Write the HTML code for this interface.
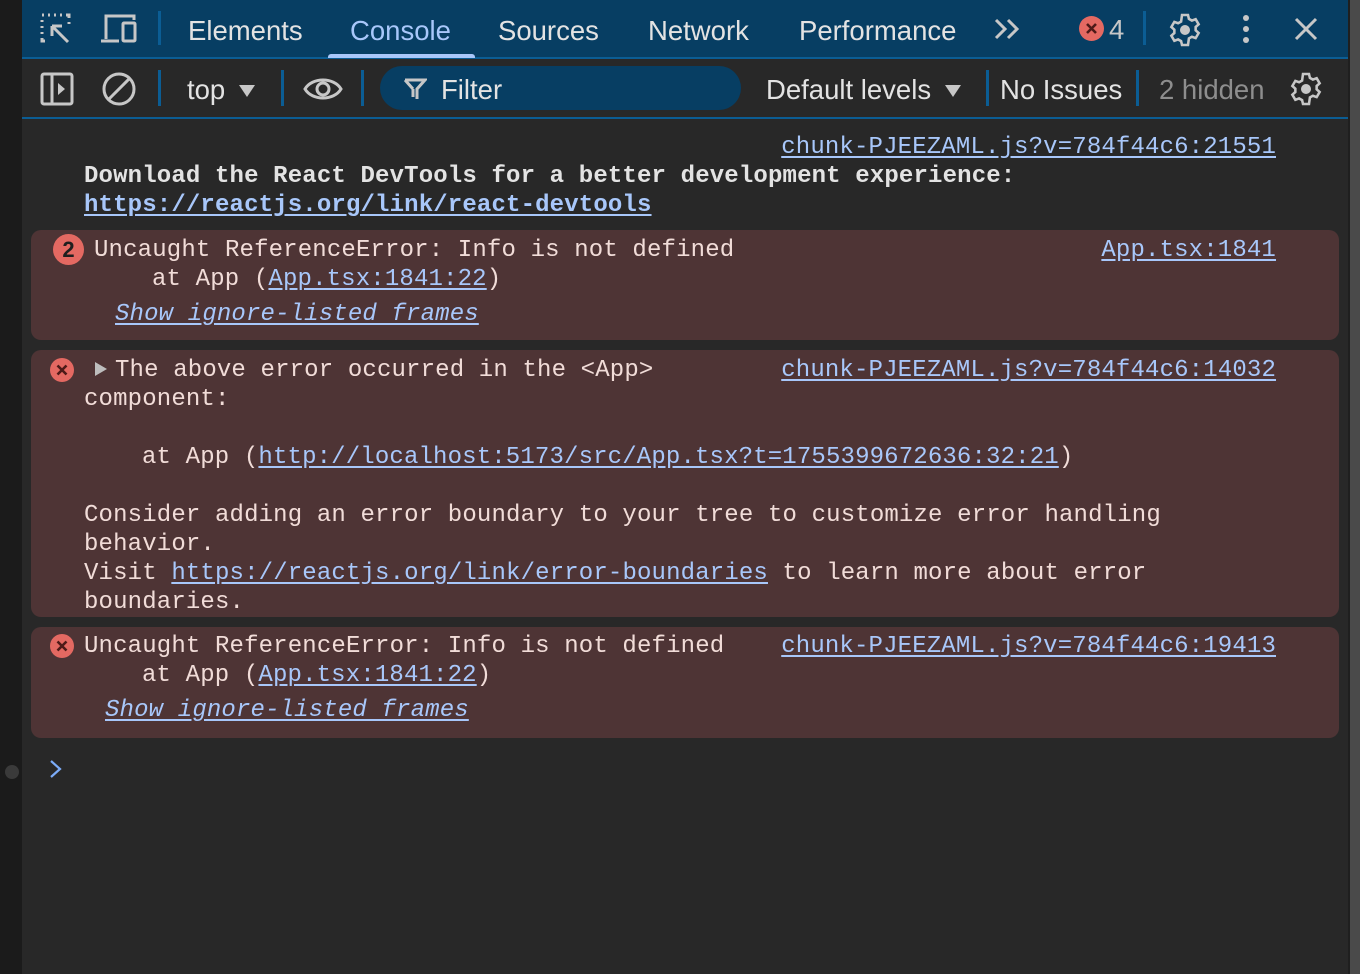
<!DOCTYPE html>
<html><head><meta charset="utf-8"><style>
*{margin:0;padding:0;box-sizing:border-box}
body{width:1360px;height:974px;background:#282828;position:relative;overflow:hidden;font-family:"Liberation Sans",sans-serif}
.l{position:absolute;font-family:"Liberation Mono","DejaVu Sans Mono",monospace;font-size:24px;letter-spacing:0.15px;line-height:29px;color:#f1dcd8;white-space:pre;margin-top:2px}
.w{color:#e3e3e3}
a,.a{color:#a8c7fa;text-decoration:underline;text-underline-offset:3px}
.r{right:84px}
.box{position:absolute;left:31px;right:21px;background:#4e3435;border-radius:10px}
.t{position:absolute;font-size:27.5px;color:#e3e3e3;line-height:30px;white-space:nowrap}
.sep{position:absolute;width:3px;background:#0b5d94}
svg{position:absolute}
</style></head><body>
<div style="position:absolute;left:0;top:0;width:22px;height:974px;background:#1b1b1b"></div>
<div style="position:absolute;left:5px;top:765px;width:14px;height:14px;border-radius:7px;background:#3a3a3a"></div>
<div style="position:absolute;left:1348px;top:0;width:12px;height:974px;background:#4a4a4a;border-left:2px solid #1f1f1f"></div>
<div style="position:absolute;left:22px;top:0;width:1326px;height:58px;background:#073e63"></div>
<div style="position:absolute;left:22px;top:57px;width:1326px;height:2px;background:#0b5d94"></div>
<div style="position:absolute;left:328px;top:54px;width:147px;height:4px;background:#a8c7fa;border-radius:3px 3px 0 0"></div>
<div style="position:absolute;left:22px;top:117px;width:1326px;height:2px;background:#0b5d94"></div>

<svg style="left:40px;top:12px" width="34" height="34" viewBox="0 0 34 34" fill="none" stroke="#c7c7c7" stroke-width="3"><path d="M2 3h2M8 3h2M14 3h2M20 3h2M26 3h3v3M29 10v2M2 8v2M2 14v2M2 20v2M2 26v3h3" /><path d="M12 14h10M12 14v10M13 15l15 15"/></svg>
<svg style="left:100px;top:13px" width="40" height="32" viewBox="0 0 40 32" fill="none" stroke="#c7c7c7" stroke-width="3"><path d="M6 26V3h28v4M1 28h18"/><rect x="23" y="10" width="12" height="18" rx="1"/></svg>
<div class="sep" style="left:158px;top:11px;height:34px"></div>
<div class="t" style="left:188px;top:16px">Elements</div>
<div class="t" style="left:350px;top:16px;color:#a8c7fa">Console</div>
<div class="t" style="left:498px;top:16px">Sources</div>
<div class="t" style="left:648px;top:16px">Network</div>
<div class="t" style="left:799px;top:16px">Performance</div>
<svg style="left:994px;top:17px" width="28" height="24" viewBox="0 0 28 24" fill="none" stroke="#c7c7c7" stroke-width="3"><path d="M2 3l9 9-9 9M14 3l9 9-9 9"/></svg>
<div style="position:absolute;left:1079px;top:16px;width:25px;height:25px;border-radius:13px;background:#e46962"></div>
<svg style="left:1079px;top:16px" width="25" height="25" viewBox="0 0 25 25" stroke="#4e1a18" stroke-width="2.6"><path d="M8 8l9 9M17 8l-9 9"/></svg>
<div class="t" style="left:1109px;top:15px;color:#c7c7c7">4</div>
<div class="sep" style="left:1143px;top:11px;height:34px"></div>
<svg style="left:1167px;top:12px" width="36" height="36" viewBox="0 0 24 24" fill="none" stroke="#c7c7c7" stroke-width="1.7"><path d="M10 2h4l.6 2.6 2 1.1 2.5-.9 2 3.4-2 1.8v2.2l2 1.8-2 3.4-2.5-.9-2 1.1L14 22h-4l-.6-2.6-2-1.1-2.5.9-2-3.4 2-1.8v-2.2l-2-1.8 2-3.4 2.5.9 2-1.1z"/><circle cx="12" cy="12" r="2.5" fill="#c7c7c7"/></svg>
<svg style="left:1240px;top:14px" width="12" height="30"><circle cx="6" cy="4" r="3" fill="#c7c7c7"/><circle cx="6" cy="15" r="3" fill="#c7c7c7"/><circle cx="6" cy="26" r="3" fill="#c7c7c7"/></svg>
<svg style="left:1294px;top:17px" width="24" height="24" stroke="#c7c7c7" stroke-width="3"><path d="M2 2l20 20M22 2L2 22"/></svg>

<svg style="left:40px;top:72px" width="34" height="34" viewBox="0 0 34 34" fill="none" stroke="#c7c7c7" stroke-width="3"><rect x="2" y="2" width="30" height="30" rx="2"/><path d="M12 2v30"/><path d="M18 11l7 6-7 6z" fill="#c7c7c7" stroke="none"/></svg>
<svg style="left:101px;top:71px" width="36" height="36" fill="none" stroke="#c7c7c7" stroke-width="3"><circle cx="18" cy="18" r="15"/><path d="M7 29L29 7"/></svg>
<div class="sep" style="left:158px;top:70px;height:36px"></div>
<div class="t" style="left:187px;top:75px">top</div>
<svg style="left:238px;top:84px" width="18" height="14"><path d="M1 1h16L9 13z" fill="#c7c7c7"/></svg>
<div class="sep" style="left:281px;top:70px;height:36px"></div>
<svg style="left:303px;top:74px" width="40" height="30" fill="none" stroke="#c7c7c7" stroke-width="3"><path d="M2 15C9 3 31 3 38 15 31 27 9 27 2 15z"/><circle cx="20" cy="15" r="6"/></svg>
<div class="sep" style="left:361px;top:70px;height:36px"></div>
<div style="position:absolute;left:380px;top:66px;width:361px;height:44px;border-radius:22px;background:#073e63"></div>
<svg style="left:403px;top:77px" width="24" height="24" fill="none" stroke="#c7c7c7" stroke-width="3"><path d="M2 3h20l-8 9v10M10 12L2 3M10 12v8"/></svg>
<div class="t" style="left:441px;top:75px">Filter</div>
<div class="t" style="left:766px;top:75px">Default levels</div>
<svg style="left:944px;top:84px" width="18" height="14"><path d="M1 1h16L9 13z" fill="#c7c7c7"/></svg>
<div class="sep" style="left:986px;top:70px;height:36px"></div>
<div class="t" style="left:1000px;top:75px">No Issues</div>
<div class="sep" style="left:1136px;top:70px;height:36px"></div>
<div class="t" style="left:1159px;top:75px;color:#8e8e8e">2 hidden</div>
<svg style="left:1288px;top:71px" width="36" height="36" viewBox="0 0 24 24" fill="none" stroke="#c7c7c7" stroke-width="1.7"><path d="M10 2h4l.6 2.6 2 1.1 2.5-.9 2 3.4-2 1.8v2.2l2 1.8-2 3.4-2.5-.9-2 1.1L14 22h-4l-.6-2.6-2-1.1-2.5.9-2-3.4 2-1.8v-2.2l-2-1.8 2-3.4 2.5.9 2-1.1z"/><circle cx="12" cy="12" r="2.5" fill="#c7c7c7"/></svg>

<div class="l r a" style="top:131px">chunk-PJEEZAML.js?v=784f44c6:21551</div>
<div class="l w" style="left:84px;top:160px;font-weight:bold">Download the React DevTools for a better development experience:</div>
<div class="l a" style="left:84px;top:189px;font-weight:bold">https://reactjs.org/link/react-devtools</div>

<div class="box" style="top:230px;height:110px"></div>
<div style="position:absolute;left:53px;top:234px;width:31px;height:31px;border-radius:16px;background:#e46962;color:#1f1f1f;font:bold 22px/31px 'Liberation Sans',sans-serif;text-align:center">2</div>
<div class="l" style="left:94px;top:234px">Uncaught ReferenceError: Info is not defined</div>
<div class="l r a" style="top:234px">App.tsx:1841</div>
<div class="l" style="left:152px;top:263px">at App (<span class="a">App.tsx:1841:22</span>)</div>
<div class="l a" style="left:115px;top:298px;font-style:italic">Show ignore-listed frames</div>

<div class="box" style="top:350px;height:267px"></div>
<div style="position:absolute;left:50px;top:358px;width:24px;height:24px;border-radius:12px;background:#e46962"></div>
<svg style="left:50px;top:358px" width="24" height="24" stroke="#4e1a18" stroke-width="2.6"><path d="M7.5 7.5l9 9M16.5 7.5l-9 9"/></svg>
<svg style="left:94px;top:361px" width="14" height="16"><path d="M1 1l12 7-12 7z" fill="#bdbdbd"/></svg>
<div class="l" style="left:115px;top:354px">The above error occurred in the &lt;App&gt;</div>
<div class="l r a" style="top:354px">chunk-PJEEZAML.js?v=784f44c6:14032</div>
<div class="l" style="left:84px;top:383px">component:</div>
<div class="l" style="left:142px;top:441px">at App (<span class="a">http://localhost:5173/src/App.tsx?t=1755399672636:32:21</span>)</div>
<div class="l" style="left:84px;top:499px">Consider adding an error boundary to your tree to customize error handling</div>
<div class="l" style="left:84px;top:528px">behavior.</div>
<div class="l" style="left:84px;top:557px">Visit <span class="a">https://reactjs.org/link/error-boundaries</span> to learn more about error</div>
<div class="l" style="left:84px;top:586px">boundaries.</div>

<div class="box" style="top:627px;height:111px"></div>
<div style="position:absolute;left:50px;top:634px;width:24px;height:24px;border-radius:12px;background:#e46962"></div>
<svg style="left:50px;top:634px" width="24" height="24" stroke="#4e1a18" stroke-width="2.6"><path d="M7.5 7.5l9 9M16.5 7.5l-9 9"/></svg>
<div class="l" style="left:84px;top:630px">Uncaught ReferenceError: Info is not defined</div>
<div class="l r a" style="top:630px">chunk-PJEEZAML.js?v=784f44c6:19413</div>
<div class="l" style="left:142px;top:659px">at App (<span class="a">App.tsx:1841:22</span>)</div>
<div class="l a" style="left:105px;top:694px;font-style:italic">Show ignore-listed frames</div>

<svg style="left:49px;top:759px" width="14" height="20" fill="none" stroke="#7cacf8" stroke-width="2.2"><path d="M2 2l9 8-9 8"/></svg>
</body></html>
